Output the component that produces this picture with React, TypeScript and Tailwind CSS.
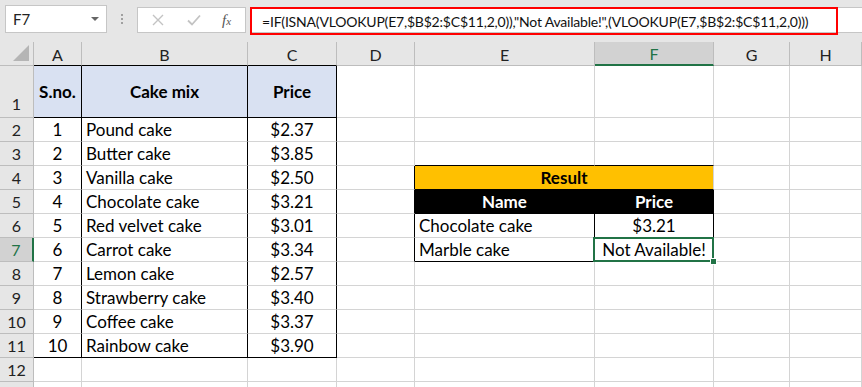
import React from "react";

type Row = { sno: number; name: string; price: string };

const cakes: Row[] = [
  { sno: 1, name: "Pound cake", price: "$2.37" },
  { sno: 2, name: "Butter cake", price: "$3.85" },
  { sno: 3, name: "Vanilla cake", price: "$2.50" },
  { sno: 4, name: "Chocolate cake", price: "$3.21" },
  { sno: 5, name: "Red velvet cake", price: "$3.01" },
  { sno: 6, name: "Carrot cake", price: "$3.34" },
  { sno: 7, name: "Lemon cake", price: "$2.57" },
  { sno: 8, name: "Strawberry cake", price: "$3.40" },
  { sno: 9, name: "Coffee cake", price: "$3.37" },
  { sno: 10, name: "Rainbow cake", price: "$3.90" },
];

const letters = ["A", "B", "C", "D", "E", "F", "G", "H"];
const FORMULA = '=IF(ISNA(VLOOKUP(E7,$B$2:$C$11,2,0)),"Not Available!",(VLOOKUP(E7,$B$2:$C$11,2,0)))';

const Toolbar = () => (
  <div className="h-[42px] bg-[#e6e6e6] flex items-start pt-[5px] pl-[5px]">
    <div className="w-[102px] h-[28px] bg-white border border-[#c6c6c6] flex items-center justify-between pl-[7px] pr-[7px] text-[15px] text-[#222]">
      <span>F7</span>
      <span className="w-0 h-0 border-l-[4px] border-r-[4px] border-t-[4px] border-l-transparent border-r-transparent border-t-[#666]" />
    </div>
    <div className="w-[30px] h-[28px] flex flex-col items-center justify-center gap-[2px]">
      <span className="w-[2px] h-[2px] bg-[#a0a0a0]" />
      <span className="w-[2px] h-[2px] bg-[#a0a0a0]" />
      <span className="w-[2px] h-[2px] bg-[#a0a0a0]" />
    </div>
    <div className="mt-[2px] w-[109px] h-[26px] bg-white border border-[#c6c6c6] flex items-center">
      <svg className="ml-[14px]" width="12" height="12" viewBox="0 0 12 12">
        <path d="M1 1 L11 11 M11 1 L1 11" stroke="#c3c3c3" strokeWidth="1.4" fill="none" />
      </svg>
      <svg className="ml-[23px]" width="14" height="12" viewBox="0 0 14 12">
        <path d="M1 6.5 L5 10.5 L13 1.5" stroke="#c3c3c3" strokeWidth="1.8" fill="none" />
      </svg>
      <span className="ml-[21px] text-[15px] italic text-[#555]" style={{ fontFamily: '"Liberation Serif", serif' }}>
        f<span className="text-[11px]">x</span>
      </span>
    </div>
    <div className="relative ml-[4px] mt-[2px] flex-1 h-[26px] bg-white border-y border-l border-[#c6c6c6]">
      <div className="absolute -top-px -left-px w-[588px] h-[28px] border-2 border-[#ff0000] flex items-center pl-[10px] text-[14px] tracking-[-0.2px] text-[#111] whitespace-nowrap">
        {FORMULA}
      </div>
    </div>
  </div>
);

function cellContent(r: number, c: number): { text: React.ReactNode; cls: string } {
  if (r === 1) {
    const t = c === 1 ? "S.no." : c === 2 ? "Cake mix" : c === 3 ? "Price" : "";
    return { text: t, cls: "justify-center font-bold" };
  }
  if (r >= 2 && r <= 11 && c >= 1 && c <= 3) {
    const row = cakes[r - 2];
    if (c === 1) return { text: row.sno, cls: "justify-center" };
    if (c === 2) return { text: row.name, cls: "justify-start pl-[4px]" };
    return { text: row.price, cls: "justify-center" };
  }
  if (r === 4 && c === 5) return { text: "Result", cls: "justify-center font-bold" };
  if (r === 5 && c === 5) return { text: "Name", cls: "justify-center font-bold" };
  if (r === 5 && c === 6) return { text: "Price", cls: "justify-center font-bold" };
  if (r === 6 && c === 5) return { text: "Chocolate cake", cls: "justify-start pl-[4px]" };
  if (r === 6 && c === 6) return { text: "$3.21", cls: "justify-center" };
  if (r === 7 && c === 5) return { text: "Marble cake", cls: "justify-start pl-[4px]" };
  if (r === 7 && c === 6) return { text: "Not Available!", cls: "justify-center" };
  return { text: "", cls: "" };
}

const Sheet = () => {
  const cells: React.ReactNode[] = [];

  // column headers
  cells.push(
    <div key="corner" className="relative bg-[#e6e6e6] border-r border-b border-[#bdbdbd]">
      <svg className="absolute right-[4px] bottom-[4px]" width="16" height="16" viewBox="0 0 16 16">
        <path d="M16 0 L16 16 L0 16 Z" fill="#b5b5b5" />
      </svg>
    </div>
  );
  letters.forEach((l, i) => {
    const c = i + 1;
    const sel = l === "F";
    const under = c >= 1 && c <= 3;
    cells.push(
      <div
        key={"h" + l}
        className={`flex items-center justify-center pt-[2px] text-[16px] border-r border-r-[#bdbdbd] ${
          sel
            ? "bg-[#d2d2d2] text-[#217346] border-b-2 border-b-[#217346]"
            : `bg-[#e6e6e6] text-[#222] border-b ${under ? "border-b-black" : "border-b-[#bdbdbd]"}`
        }`}
      >
        {l}
      </div>
    );
  });

  for (let r = 1; r <= 13; r++) {
    const sel = r === 7;
    cells.push(
      <div
        key={"r" + r}
        className={`flex justify-center text-[16px] border-b border-b-[#bdbdbd] ${r === 1 ? "items-end pb-[1px]" : "items-center"} ${
          sel ? "bg-[#d2d2d2] text-[#217346] border-r-2 border-r-[#217346]" : "bg-[#e6e6e6] text-[#222] border-r border-r-[#bdbdbd]"
        }`}
      >
        {r < 13 ? r : ""}
      </div>
    );
    for (let c = 1; c <= 8; c++) {
      if (r === 4 && c === 6) continue;
      const rightBlack =
        (r >= 1 && r <= 11 && c >= 1 && c <= 3) ||
        (r >= 4 && r <= 7 && (c === 4 || c === 6)) ||
        (r >= 5 && r <= 7 && c === 5);
      const bottomBlack =
        ((r === 1 || r === 11) && c >= 1 && c <= 3) ||
        ((r === 3 || r === 4 || r === 5 || r === 7) && (c === 5 || c === 6));
      let bg = "bg-white text-black";
      if (r === 1 && c <= 3) bg = "bg-[#d9e1f2] text-black";
      if (r === 4 && c === 5) bg = "bg-[#ffc000] text-black";
      if (r === 5 && (c === 5 || c === 6)) bg = "bg-black text-white";
      const { text, cls } = cellContent(r, c);
      const span = r === 4 && c === 5 ? "col-span-2" : "";
      cells.push(
        <div
          key={`c${r}-${c}`}
          className={`relative flex items-center pt-[1px] text-[17px] whitespace-nowrap border-r border-b ${span} ${bg} ${cls} ${
            rightBlack ? "border-r-black" : "border-r-[#d4d4d4]"
          } ${bottomBlack ? "border-b-black" : "border-b-[#d4d4d4]"}`}
        >
          {text}
          {r === 7 && c === 6 && (
            <>
              <span className="absolute -left-[2px] -top-px -right-px -bottom-px border-2 border-[#217346] z-10" />
              <span className="absolute -right-[4px] -bottom-[4px] w-[7px] h-[7px] bg-[#217346] border border-white z-20" />
            </>
          )}
        </div>
      );
    }
  }

  return (
    <div className="grid grid-cols-[34px_48px_166px_89px_78px_180px_119px_76px_1fr] grid-rows-[24px_52px_repeat(12,24px)]">
      {cells}
    </div>
  );
};

export default function App() {
  return (
    <div className="w-[862px] h-[387px] overflow-hidden bg-white" style={{ fontFamily: "Lato, 'Liberation Sans', sans-serif" }}>
      <Toolbar />
      <Sheet />
    </div>
  );
}
